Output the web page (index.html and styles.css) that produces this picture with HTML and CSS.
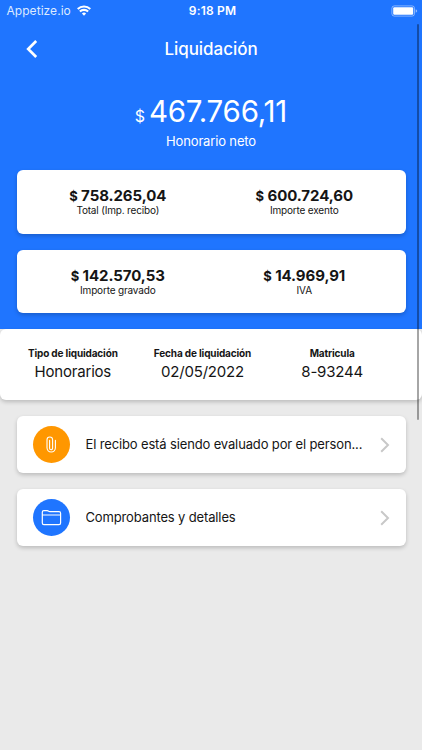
FILE: index.html
```html
<!DOCTYPE html>
<html lang="es">
<head>
    <meta charset="UTF-8">
    <meta name="viewport" content="width=device-width, initial-scale=1.0">
    <title>Liquidación</title>
    <link rel="stylesheet" href="styles.css">
</head>
<body>
    <div class="hero">
        <div class="status-bar">
            <div class="carrier">
                <span>Appetize.io</span>
                <svg class="wifi" width="14" height="11" viewBox="0 0 14 11" fill="none" stroke="#fff" stroke-width="2.1">
                    <path d="M.7 4a9 9 0 0 1 12.6 0M2.9 6.6a5.8 5.8 0 0 1 8.2 0"/>
                    <path d="M7 10.7L4.9 8.5a3 3 0 0 1 4.2 0z" fill="#fff" stroke="none"/>
                </svg>
            </div>
            <div class="clock">9:18 PM</div>
            <div class="battery">
                <svg width="27" height="12" viewBox="0 0 27 12">
                    <rect x=".9" y=".9" width="22.6" height="10.2" rx="2.4" fill="none" stroke="#fff" stroke-opacity=".45"/>
                    <rect x="2.2" y="2.2" width="20" height="7.6" rx="1.2" fill="#fff"/>
                    <path d="M24.7 4.2q1.5.5 1.5 1.8t-1.5 1.8z" fill="#fff" fill-opacity=".5"/>
                </svg>
            </div>
        </div>

        <header class="nav-bar">
            <a class="back" href="#" aria-label="Volver">
                <svg width="12" height="18" viewBox="0 0 12 18" fill="none" stroke="#fff" stroke-width="2.7">
                    <path d="M10.2 1L2.2 9l8 8"/>
                </svg>
            </a>
            <h1>Liquidación</h1>
        </header>

        <div class="total">
            <div class="total-amount"><small>$</small><span>467.766,11</span></div>
            <div class="total-label">Honorario neto</div>
        </div>

        <div class="card amounts">
            <div class="amount">
                <strong><small>$</small> 758.265,04</strong>
                <span>Total (Imp. recibo)</span>
            </div>
            <div class="amount">
                <strong><small>$</small> 600.724,60</strong>
                <span>Importe exento</span>
            </div>
        </div>

        <div class="card amounts">
            <div class="amount">
                <strong><small>$</small> 142.570,53</strong>
                <span>Importe gravado</span>
            </div>
            <div class="amount">
                <strong><small>$</small> 14.969,91</strong>
                <span>IVA</span>
            </div>
        </div>
    </div>

    <div class="info">
        <div class="info-item">
            <strong>Tipo de liquidación</strong>
            <span>Honorarios</span>
        </div>
        <div class="info-item">
            <strong>Fecha de liquidación</strong>
            <span>02/05/2022</span>
        </div>
        <div class="info-item">
            <strong>Matricula</strong>
            <span>8-93244</span>
        </div>
    </div>

    <main class="rows">
        <a class="card row" href="#">
            <div class="icon orange">
                <svg width="37" height="37" viewBox="0 0 37 37" fill="none" stroke="#fff" stroke-width="1.1" stroke-linecap="round">
                    <path d="M16.6 14.4v7.8a1.5 1.5 0 0 0 3 0v-8.4a2.8 2.8 0 0 0-5.6 0v8a4.2 4.2 0 0 0 8.4 0v-7.4"/>
                </svg>
            </div>
            <span class="row-text">El recibo está siendo evaluado por el person...</span>
            <svg class="chevron" width="10" height="16" viewBox="0 0 10 16">
                <path d="M1.2 1.2L8 8l-6.8 6.8"/>
            </svg>
        </a>
        <a class="card row" href="#">
            <div class="icon blue">
                <svg width="37" height="37" viewBox="0 0 37 37" fill="none" stroke="#fff" stroke-width="1.2" stroke-linejoin="round">
                    <path d="M9.3 16.6v-3.4q0-1.5 1.5-1.5h3.4q.8 0 1.4.5.5.5 1.4.5h9q1.6 0 1.6 1.6v2.3M9.3 16h18.3M9.3 16v8q0 1.6 1.6 1.6H26q1.6 0 1.6-1.6v-8"/>
                </svg>
            </div>
            <span class="row-text">Comprobantes y detalles</span>
            <svg class="chevron" width="10" height="16" viewBox="0 0 10 16">
                <path d="M1.2 1.2L8 8l-6.8 6.8"/>
            </svg>
        </a>
    </main>

    <div class="scrollbar"></div>
</body>
</html>
```

FILE: styles.css
```css
* {
    box-sizing: border-box;
}
body {
    margin: 0;
    min-height: 750px;
    font-family: Inter, 'Liberation Sans', sans-serif;
    color: #151515;
    background: #eaeaea;
}
.hero {
    height: 329px;
    padding: 0 16.5px;
    color: #fff;
    background: #1f75ff;
}
.status-bar {
    display: grid;
    grid-template-columns: 1fr auto 1fr;
    align-items: center;
    height: 21px;
    margin: 0 -12px 0 -10px;
    font-size: 12px;
}
.carrier {
    display: flex;
    align-items: center;
    gap: 6px;
    letter-spacing: 0.05px;
    color: #dceaff;
}
.clock {
    padding-left: 1px;
    font-weight: 600;
    letter-spacing: 0.2px;
}
.battery {
    display: flex;
    justify-content: flex-end;
}
.nav-bar {
    display: grid;
    grid-template-columns: 30px 1fr 30px;
    align-items: center;
    height: 56px;
}
.back {
    display: flex;
    padding-left: 9px;
}
h1 {
    margin: 0;
    font-size: 17px;
    font-weight: 450;
    letter-spacing: -0.05px;
    text-align: center;
}
.total {
    height: 93px;
    padding-top: 16px;
    text-align: center;
}
.total-amount {
    display: flex;
    justify-content: center;
    align-items: baseline;
    gap: 4px;
    font-size: 29.5px;
    line-height: 36px;
    letter-spacing: -0.2px;
}
.total-amount small {
    font-size: 16px;
}
.total-label {
    margin-top: -2px;
    font-size: 13px;
    line-height: 18px;
    letter-spacing: -0.15px;
}
.card {
    background: #fff;
    border-radius: 6px;
    box-shadow: 0 2px 4px rgba(0, 0, 0, 0.2);
}
.amounts {
    display: grid;
    grid-template-columns: 1fr 1fr;
    height: 63.5px;
    margin-bottom: 16px;
    padding: 17px 8px 0;
    color: #151515;
}
.amount {
    display: flex;
    flex-direction: column;
    align-items: center;
}
.amount strong {
    font-size: 15px;
    line-height: 18px;
    font-weight: 700;
    letter-spacing: -0.07px;
}
.amount small {
    font-size: 13px;
}
.amount span {
    margin-top: -1px;
    font-size: 10px;
    line-height: 12px;
    letter-spacing: -0.17px;
}
.info {
    display: grid;
    grid-template-columns: repeat(3, 1fr);
    height: 70.5px;
    padding: 17px 25px 0 8px;
    background: #fff;
    border-radius: 6px;
    box-shadow: 0 2px 4px rgba(0, 0, 0, 0.2);
}
.info-item {
    display: flex;
    flex-direction: column;
    align-items: center;
}
.info-item strong {
    font-size: 10px;
    line-height: 14px;
    font-weight: 700;
    letter-spacing: -0.14px;
    white-space: nowrap;
}
.info-item span {
    font-size: 15px;
    line-height: 23px;
    letter-spacing: -0.2px;
}
.rows {
    display: flex;
    flex-direction: column;
    gap: 16px;
    padding: 16.5px 16.5px 0;
}
.row {
    display: flex;
    align-items: center;
    height: 57px;
    padding: 0 15.5px 0 16px;
    color: #151515;
    text-decoration: none;
}
.icon {
    flex: none;
    width: 37px;
    height: 37px;
    border-radius: 50%;
}
.icon svg {
    display: block;
}
.orange {
    background: #ff9700;
}
.blue {
    background: #1f75ff;
}
.row-text {
    flex: 1;
    margin: 0 13px 1px 16px;
    font-size: 13px;
    letter-spacing: -0.14px;
    overflow: hidden;
    text-overflow: ellipsis;
    white-space: nowrap;
}
.chevron {
    flex: none;
    fill: none;
    stroke: #c8c8c8;
    stroke-width: 2;
}
.scrollbar {
    position: absolute;
    top: 24px;
    right: 3px;
    width: 2.5px;
    height: 396px;
    border-radius: 2px;
    background: rgba(0, 0, 0, 0.35);
}
```
